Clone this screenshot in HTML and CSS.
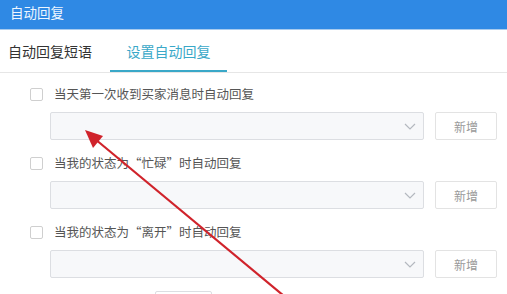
FILE: index.html
```html
<!DOCTYPE html>
<html lang="zh-CN">
<head>
<meta charset="utf-8">
<title>自动回复</title>
<link rel="stylesheet" href="styles.css">
</head>
<body>
<div class="page">
  <div class="header">自动回复</div>
  <div class="tabs">
    <div class="tab">自动回复短语</div>
    <div class="tab active">设置自动回复</div>
  </div>
  <div class="content">
    <div class="item">
      <div class="check-row"><span class="checkbox"></span><span class="label">当天第一次收到买家消息时自动回复</span></div>
      <div class="select-row">
        <div class="select"><svg class="chev" width="12" height="7" viewBox="0 0 12 7"><path d="M1 1 L6 6 L11 1" fill="none" stroke="#b4b8bf" stroke-width="1.2"/></svg></div>
        <div class="btn">新增</div>
      </div>
    </div>
    <div class="item">
      <div class="check-row"><span class="checkbox"></span><span class="label">当我的状态为“忙碌”时自动回复</span></div>
      <div class="select-row">
        <div class="select"><svg class="chev" width="12" height="7" viewBox="0 0 12 7"><path d="M1 1 L6 6 L11 1" fill="none" stroke="#b4b8bf" stroke-width="1.2"/></svg></div>
        <div class="btn">新增</div>
      </div>
    </div>
    <div class="item">
      <div class="check-row"><span class="checkbox"></span><span class="label">当我的状态为“离开”时自动回复</span></div>
      <div class="select-row">
        <div class="select"><svg class="chev" width="12" height="7" viewBox="0 0 12 7"><path d="M1 1 L6 6 L11 1" fill="none" stroke="#b4b8bf" stroke-width="1.2"/></svg></div>
        <div class="btn">新增</div>
      </div>
    </div>
    <div class="item last">
      <div class="bottom-row"><span class="small-input"></span></div>
    </div>
  </div>
  <svg class="arrow" width="507" height="294" viewBox="0 0 507 294">
    <line x1="95" y1="139" x2="284" y2="296" stroke="#d0232b" stroke-width="2.2"/>
    <polygon points="85,130 103,136 93,148" fill="#d0232b"/>
  </svg>
</div>
</body>
</html>
```
FILE: styles.css
```css
* { box-sizing: border-box; }
html, body { margin: 0; padding: 0; background: #fff; }
body {
  font-family: "Noto Sans CJK SC", "Noto Sans", sans-serif;
  width: 507px;
  height: 294px;
  overflow: hidden;
}
.page { position: relative; width: 507px; height: 294px; overflow: hidden; }
.header {
  height: 30px;
  background: #2f89e4;
  border-bottom: 1px solid #a8cbee;
  color: #eef6ff;
  font-size: 13.5px;
  line-height: 24px;
  padding-left: 10px;
}
.tabs {
  display: flex;
  height: 43px;
  border-bottom: 1px solid #e6e6e6;
  padding-left: 8px;
}
.tab {
  font-size: 14px;
  color: #333;
  line-height: 42px;
  height: 42px;
}
.tab.active {
  margin-left: 18px;
  width: 117px;
  text-align: center;
  color: #3aa8c8;
  border-bottom: 2px solid #3aa8c8;
}
.content { padding-top: 11px; }
.item { display: flex; flex-direction: column; gap: 8px; margin-bottom: 13px; }
.check-row {
  display: flex;
  align-items: center;
  height: 20px;
  padding-left: 30px;
}
.checkbox {
  width: 13px;
  height: 13px;
  border: 1px solid #cfcfcf;
  border-radius: 2px;
  background: #fff;
}
.label {
  margin-left: 11px;
  font-size: 12.5px;
  color: #555;
  line-height: 20px;
}
.select-row {
  display: flex;
  height: 28px;
  padding-left: 50px;
}
.select {
  width: 374px;
  height: 28px;
  background: #f7f8fa;
  border: 1px solid #dcdee2;
  border-radius: 2px;
  display: flex;
  align-items: center;
  justify-content: flex-end;
  padding-right: 7px;
}
.btn {
  margin-left: 11px;
  width: 62px;
  height: 28px;
  border: 1px solid #e3e3e3;
  border-radius: 2px;
  background: #fff;
  color: #9a9a9a;
  font-size: 12px;
  display: flex;
  align-items: center;
  justify-content: center;
}
.bottom-row {
  display: flex;
  height: 26px;
  padding-left: 155px;
}
.small-input {
  width: 57px;
  height: 26px;
  border: 1px solid #dcdee2;
  border-radius: 2px;
  background: #fff;
}
.arrow { position: absolute; left: 0; top: 0; pointer-events: none; }
```
